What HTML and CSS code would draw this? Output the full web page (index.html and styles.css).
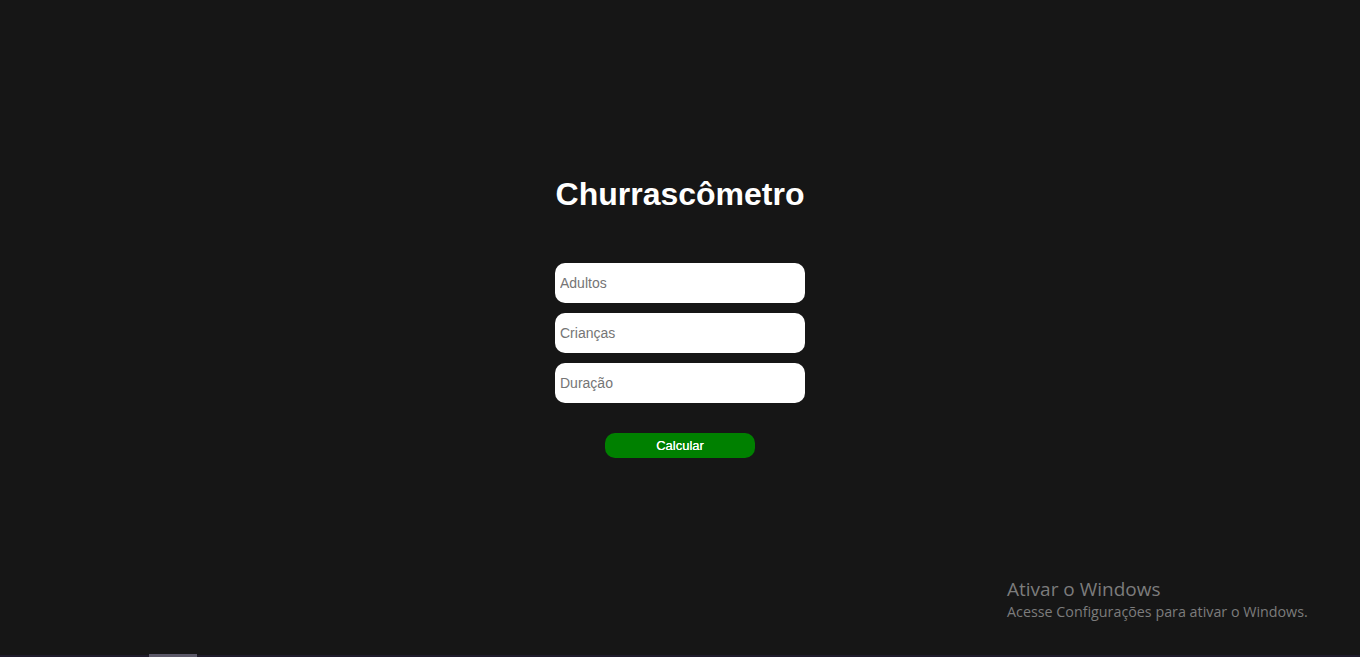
FILE: index.html
```html
<!DOCTYPE html>
<html lang="pt-BR">
<head>
<meta charset="utf-8">
<title>Churrascômetro</title>
<link rel="stylesheet" href="styles.css">
</head>
<body>
<main class="app">
  <h1 class="title">Churrascômetro</h1>
  <form class="form">
    <input class="field" type="text" placeholder="Adultos">
    <input class="field" type="text" placeholder="Crianças">
    <input class="field" type="text" placeholder="Duração">
    <button class="btn" type="button">Calcular</button>
  </form>
</main>
<div class="watermark">
  <div class="wm-title">Ativar o Windows</div>
  <div class="wm-sub">Acesse Configurações para ativar o Windows.</div>
</div>
<div class="taskbar"><span class="task-item"></span></div>
</body>
</html>
```
FILE: styles.css
```css
html, body {
  margin: 0;
  padding: 0;
  height: 100%;
}
body {
  background: #161616;
  font-family: "Liberation Sans", Arial, sans-serif;
  overflow: hidden;
  position: relative;
}
.app {
  display: flex;
  flex-direction: column;
  align-items: center;
  padding-top: 176px;
}
.title {
  margin: 0;
  font-size: 32px;
  line-height: 37px;
  font-weight: 700;
  color: #ffffff;
}
.form {
  display: flex;
  flex-direction: column;
  align-items: center;
  gap: 10px;
  margin-top: 50px;
}
.field {
  box-sizing: border-box;
  width: 250px;
  height: 40px;
  border: none;
  border-radius: 10px;
  background: #ffffff;
  padding: 0 5px;
  font-family: "Liberation Sans", Arial, sans-serif;
  font-size: 14px;
  color: #333;
  outline: none;
}
.field::placeholder {
  color: #757575;
}
.btn {
  margin-top: 20px;
  width: 150px;
  height: 25px;
  border: none;
  border-radius: 10px;
  background: #008000;
  color: #ffffff;
  font-family: "Liberation Sans", Arial, sans-serif;
  font-size: 13px;
  font-weight: 400;
  text-shadow: 0 0 0.4px #ffffff;
  padding: 0;
}
.watermark {
  position: absolute;
  left: 1007px;
  top: 577px;
  color: #7c7c7c;
  font-family: "Open Sans", "Noto Sans", sans-serif;
}
.wm-title {
  font-size: 19px;
  line-height: 24px;
}
.wm-sub {
  font-size: 14.3px;
  line-height: 22px;
}
.taskbar {
  position: absolute;
  left: 0;
  right: 0;
  bottom: 0;
  height: 2px;
  background: #1f1b2b;
}
.task-item {
  position: absolute;
  left: 149px;
  top: -1px;
  width: 48px;
  height: 3px;
  background: #5b5868;
}
```
